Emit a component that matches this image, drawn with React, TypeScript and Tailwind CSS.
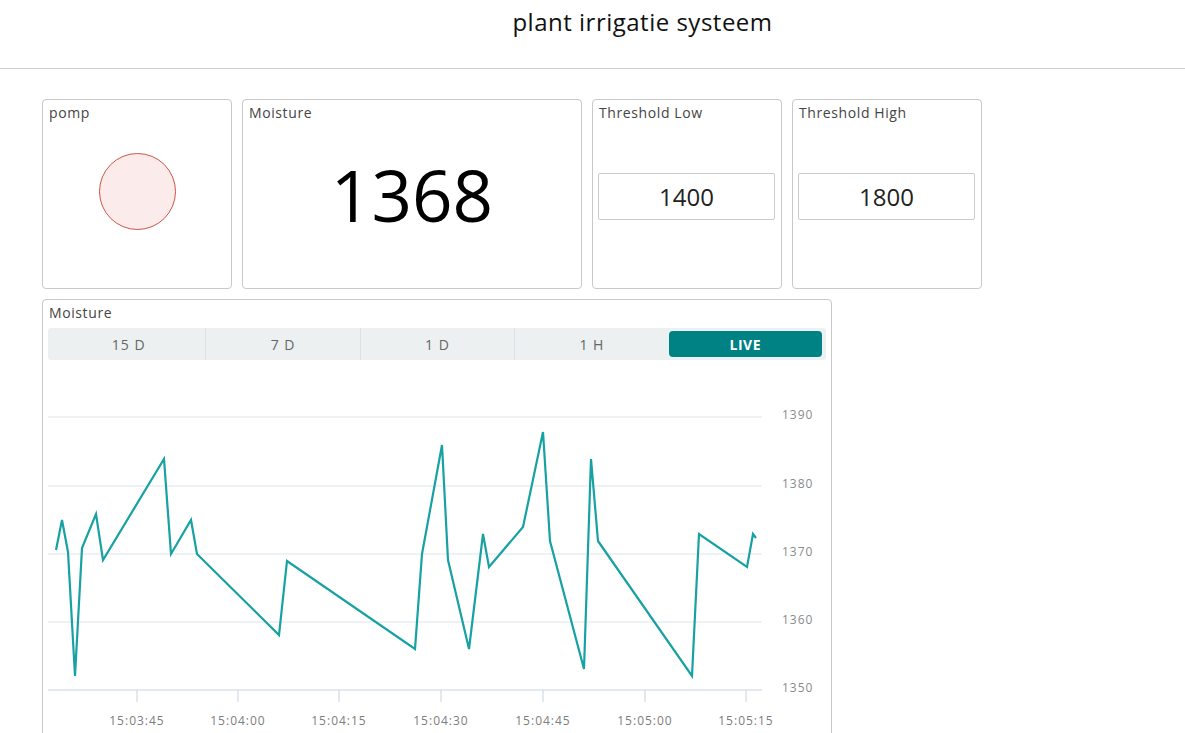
const points: [number, number][] = [
    [56, 550], [62, 520], [68, 552], [75, 676], [82, 548], [96, 514], [103, 560],
    [164, 459], [171, 554], [191, 520], [197, 554], [279, 635], [287, 561],
    [415, 649], [422, 554], [442, 445], [448, 560], [469, 649], [483, 534],
    [489, 567], [523, 527], [543, 432], [550, 541], [584, 669], [591, 459],
    [598, 541], [692, 676], [699, 534], [747, 567], [753, 534], [756, 538],
]

const yTicks = [
    { label: '1390', y: 417 },
    { label: '1380', y: 486 },
    { label: '1370', y: 554 },
    { label: '1360', y: 622 },
    { label: '1350', y: 690 },
]

const xTicks = [
    { label: '15:03:45', x: 137 },
    { label: '15:04:00', x: 238 },
    { label: '15:04:15', x: 339 },
    { label: '15:04:30', x: 441 },
    { label: '15:04:45', x: 543 },
    { label: '15:05:00', x: 645 },
    { label: '15:05:15', x: 746 },
]

const tabs = ['15 D', '7 D', '1 D', '1 H']

const Card = ({
    title,
    className,
    children,
}: {
    title: string
    className: string
    children?: React.ReactNode
}) => (
    <div
        className={`flex flex-col border border-[#c9c9c9] rounded-[4px] bg-white ${className}`}
    >
        <div className="px-[6px] pt-[3px] text-[14px] leading-[20px] tracking-[0.6px] text-[#444]">
            {title}
        </div>
        {children}
    </div>
)

const Chart = () => (
    <svg width="787" height="380" className="block">
        <g transform="translate(-43,-360)">
            {yTicks.map((t) => (
                <g key={t.label}>
                    <line
                        x1={48}
                        x2={762}
                        y1={t.y}
                        y2={t.y}
                        stroke={t.label === '1350' ? '#c8d3e0' : '#dfe5ea'}
                        strokeWidth={1}
                    />
                    <text
                        x={782}
                        y={t.y - 1}
                        fontSize={12}
                        letterSpacing={1}
                        fill="#8a8a8a"
                        dominantBaseline="middle"
                        fontFamily="'Open Sans', sans-serif"
                    >
                        {t.label}
                    </text>
                </g>
            ))}
            {xTicks.map((t) => (
                <g key={t.label}>
                    <line
                        x1={t.x}
                        x2={t.x}
                        y1={690}
                        y2={702}
                        stroke="#c8d3e0"
                        strokeWidth={1}
                    />
                    <text
                        x={t.x}
                        y={725}
                        fontSize={12}
                        letterSpacing={1}
                        fill="#7d7d7d"
                        textAnchor="middle"
                        fontFamily="'Open Sans', sans-serif"
                    >
                        {t.label}
                    </text>
                </g>
            ))}
            <polyline
                points={points.map((p) => p.join(',')).join(' ')}
                fill="none"
                stroke="#17a1a3"
                strokeWidth={2.2}
                strokeLinejoin="miter"
            />
        </g>
    </svg>
)

export default function App() {
    return (
        <div className="min-h-screen bg-white font-['Open_Sans',sans-serif]">
            <header className="h-[69px] border-b border-[#cfcfcf] flex justify-center pl-[100px] pt-[6px]">
                <h1 className="text-[24px] leading-[32px] tracking-[0.5px] text-[#111]">
                    plant irrigatie systeem
                </h1>
            </header>
            <main className="pl-[42px] pt-[30px] flex flex-col gap-[10px]">
                <div className="flex gap-[10px]">
                    <Card title="pomp" className="w-[190px] h-[190px]">
                        <div className="flex-1 flex items-center justify-center pb-[28px]">
                            <div className="w-[77px] h-[77px] rounded-full border border-[#cd5544] bg-[#fbebea]" />
                        </div>
                    </Card>
                    <Card title="Moisture" className="w-[340px] h-[190px]">
                        <div className="flex-1 flex items-center justify-center pb-[22px]">
                            <span className="text-[71px] leading-none text-black">
                                1368
                            </span>
                        </div>
                    </Card>
                    <Card title="Threshold Low" className="w-[190px] h-[190px]">
                        <div className="flex-1 flex items-center pl-[5px] pr-[6px] pb-[18px]">
                            <div className="w-full h-[47px] border border-[#cccccc] rounded-[2px] flex items-center justify-center text-[24px] text-[#222]">
                                1400
                            </div>
                        </div>
                    </Card>
                    <Card title="Threshold High" className="w-[190px] h-[190px]">
                        <div className="flex-1 flex items-center pl-[5px] pr-[6px] pb-[18px]">
                            <div className="w-full h-[47px] border border-[#cccccc] rounded-[2px] flex items-center justify-center text-[24px] text-[#222]">
                                1800
                            </div>
                        </div>
                    </Card>
                </div>
                <Card title="Moisture" className="w-[790px]">
                    <div className="mx-[5px] mt-[5px] h-[32px] px-[4px] bg-[#ecf0f1] rounded-[3px] flex items-center text-[14px] text-[#666]">
                        {tabs.map((t, i) => (
                            <div
                                key={t}
                                className={`flex-1 h-full flex items-center justify-center tracking-[1px] ${
                                    i > 0 ? 'border-l border-[#dde1e3]' : ''
                                }`}
                            >
                                {t}
                            </div>
                        ))}
                        <div className="flex-1 h-full py-[3px]">
                            <div className="h-full rounded-[4px] bg-[#008184] text-white font-bold tracking-[0.5px] flex items-center justify-center">
                                LIVE
                            </div>
                        </div>
                    </div>
                    <Chart />
                </Card>
            </main>
        </div>
    )
}
